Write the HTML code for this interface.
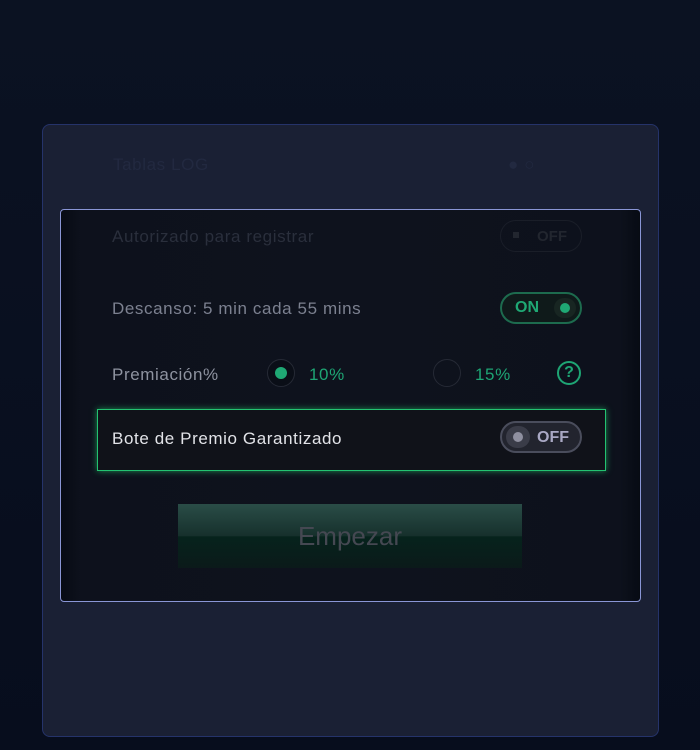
<!DOCTYPE html>
<html><head><meta charset="utf-8"><style>
*{margin:0;padding:0;box-sizing:border-box}
body{width:700px;height:750px;background:linear-gradient(#0b1222,#070d1d);font-family:"Liberation Sans",sans-serif;position:relative;overflow:hidden}
.outer{position:absolute;left:42px;top:124px;width:617px;height:613px;border:1px solid #25336a;border-radius:8px;background:#1a2034}
.t{position:absolute;font-size:17px;letter-spacing:0.6px}
.hl{position:absolute;left:60px;top:209px;width:581px;height:393px;border:1px solid #8a96d6;border-radius:4px;background:linear-gradient(90deg,#070b14 0,#0d111c 20px,#0e121d 50%,#0d111c calc(100% - 20px),#070b14 100%)}
.tg{position:absolute;border-radius:16px;height:32px;width:82px}
</style></head><body>
<div class="outer">
<div class="t" style="left:70px;top:30px;color:#222940">Tablas LOG</div>
<div class="t" style="left:465px;top:30px;color:#222940">● ○</div>
</div>
<div class="hl">
<div class="t" style="left:51px;top:17px;color:#2a2f3c">Autorizado para registrar</div>
<div class="tg" style="left:439px;top:10px;border:1px solid #1a1e28"><span style="position:absolute;left:12px;top:11px;width:6px;height:6px;background:#22262f"></span><span style="position:absolute;left:36px;top:7px;color:#22262f;font-weight:bold;font-size:15px">OFF</span></div>
<div class="t" style="left:51px;top:89px;color:#7c8190">Descanso: 5 min cada 55 mins</div>
<div class="tg" style="left:439px;top:82px;border:2px solid #1d6b4e;background:#0f1a1a"><span style="position:absolute;left:13px;top:5px;color:#1fa874;font-weight:bold;font-size:16px">ON</span><span style="position:absolute;left:52px;top:4px;width:22px;height:20px;border-radius:10px;background:#182622"></span><span style="position:absolute;left:58px;top:9px;width:10px;height:10px;border-radius:50%;background:#1fa874"></span></div>
<div class="t" style="left:51px;top:155px;color:#8e93a0">Premiación%</div>
<div style="position:absolute;left:206px;top:149px;width:28px;height:28px;border-radius:50%;border:1px solid #262a35;background:#0a0e17"><span style="position:absolute;left:7px;top:7px;width:12px;height:12px;border-radius:50%;background:#1fa874"></span></div>
<div class="t" style="left:248px;top:155px;color:#1ea574">10%</div>
<div style="position:absolute;left:372px;top:149px;width:28px;height:28px;border-radius:50%;border:1px solid #262a35"></div>
<div class="t" style="left:414px;top:155px;color:#1ea574">15%</div>
<div style="position:absolute;left:496px;top:151px;width:24px;height:24px;border-radius:50%;border:2px solid #1ea574;color:#1ea574;font-size:16px;text-align:center;line-height:20px;font-weight:bold">?</div>
<div style="position:absolute;left:36px;top:199px;width:509px;height:62px;border:1px solid #23c371;box-shadow:0 0 6px #1a8a50;background:#101219"></div>
<div class="t" style="left:51px;top:219px;color:#e2e3e8">Bote de Premio Garantizado</div>
<div class="tg" style="left:439px;top:211px;border:2px solid #4a4d5c;background:#22242e"><span style="position:absolute;left:4px;top:3px;width:24px;height:22px;border-radius:11px;background:#3a3c48"></span><span style="position:absolute;left:11px;top:9px;width:10px;height:10px;border-radius:50%;background:#8f90a0"></span><span style="position:absolute;left:35px;top:6px;color:#a9a8c4;font-weight:bold;font-size:16px">OFF</span></div>
<div style="position:absolute;left:117px;top:294px;width:344px;height:64px;background:linear-gradient(#2a4d47,#16302c 50%,#06231c 51%,#0b1a1a);text-align:center;line-height:64px;font-size:26px;color:#454852">Empezar</div>
</div>
</body></html>
